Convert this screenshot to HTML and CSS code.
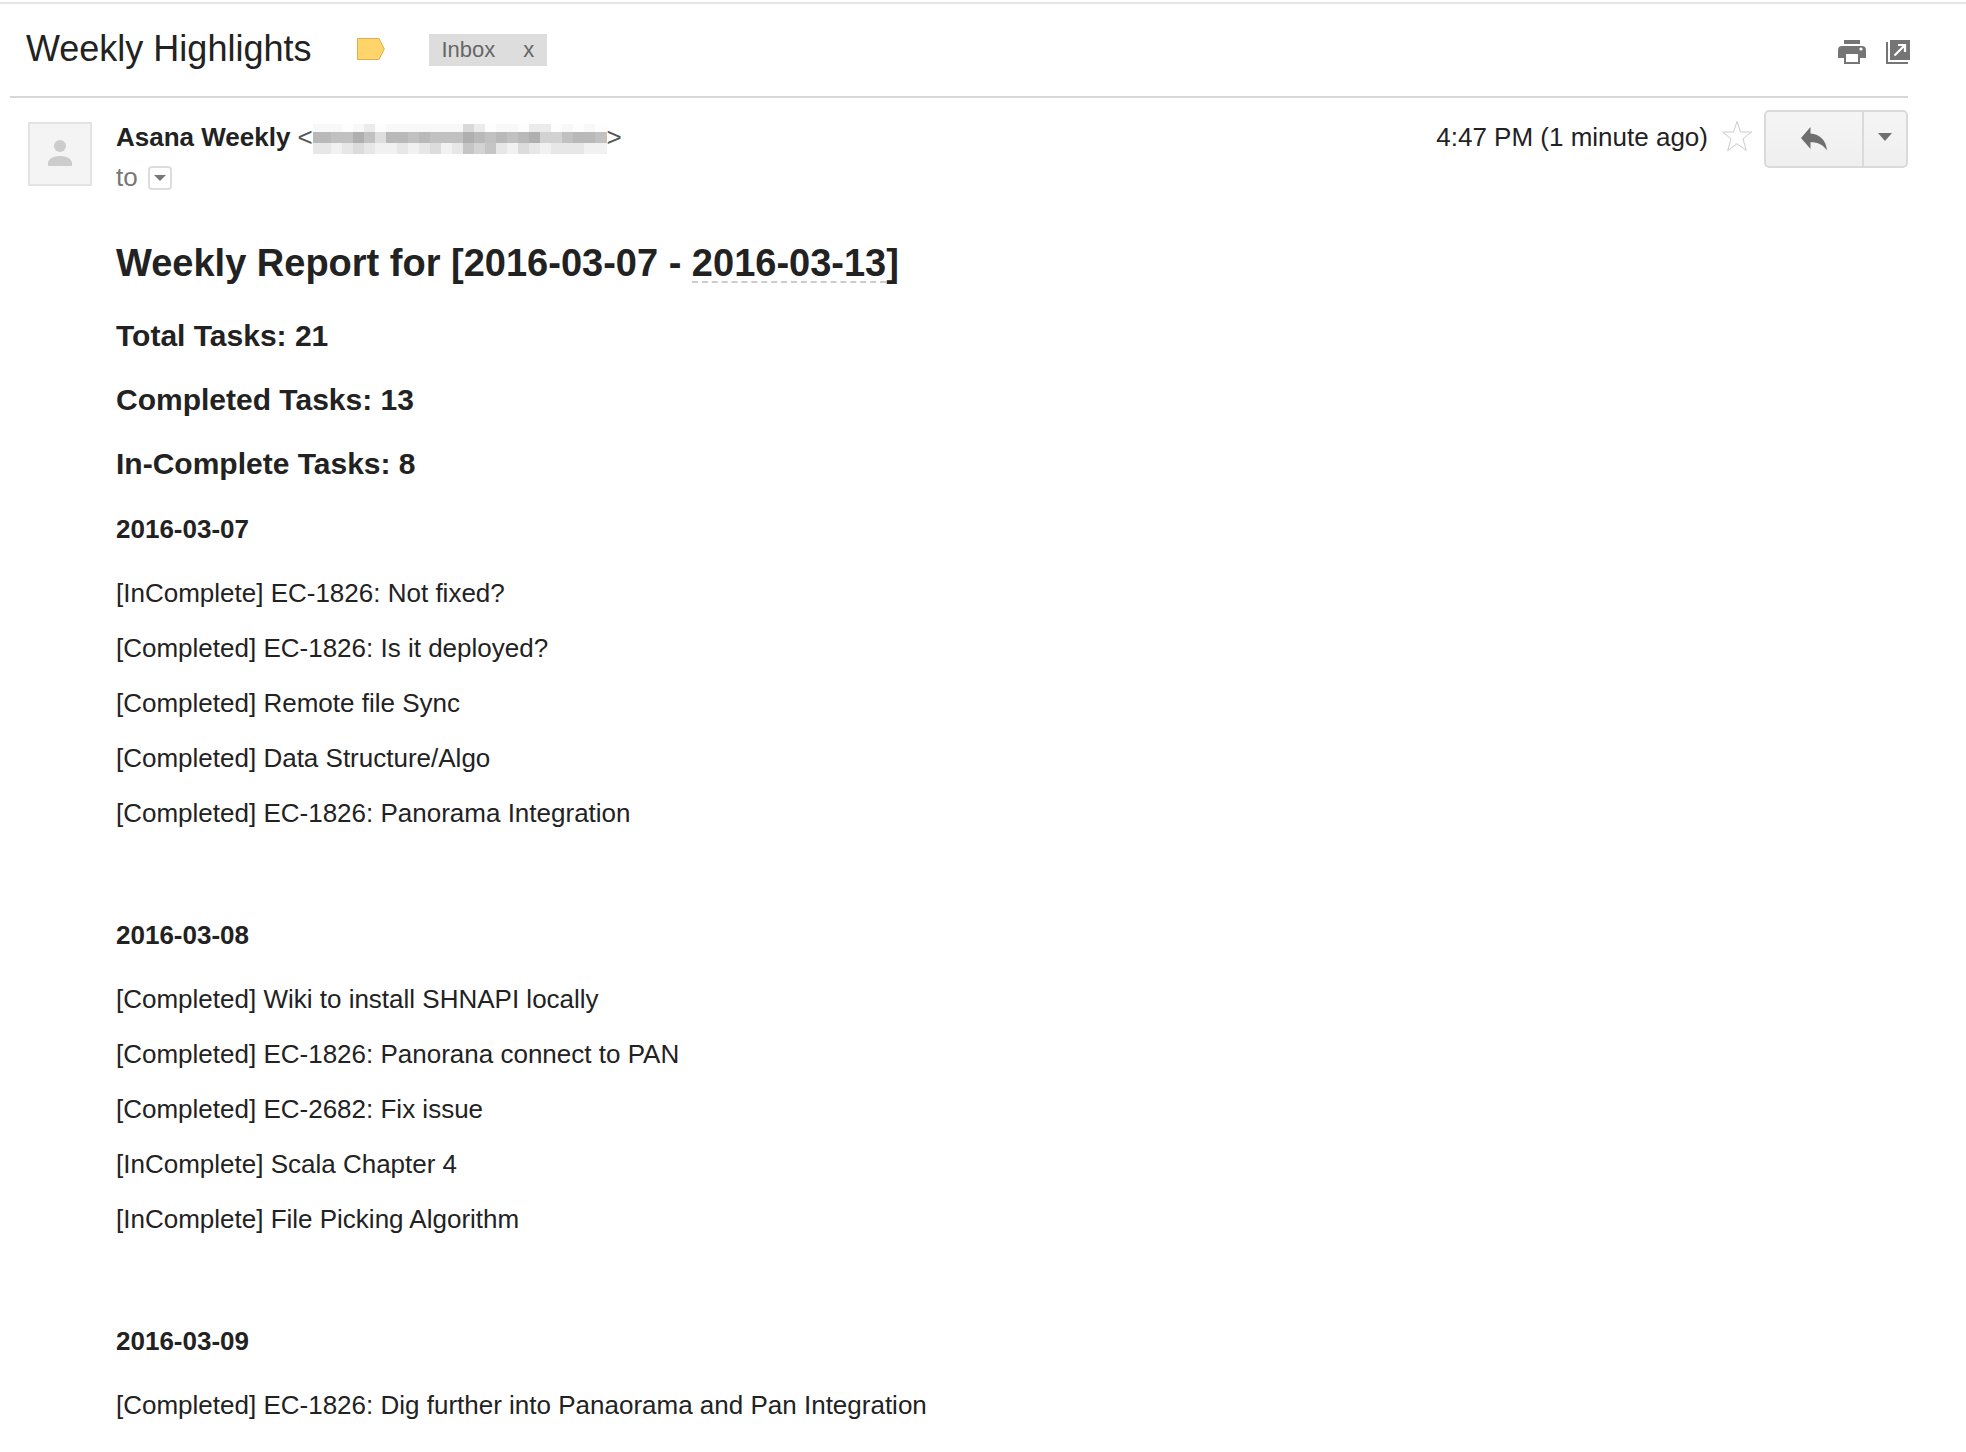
FILE: index.html
```html
<!DOCTYPE html>
<html lang="en">
<head>
<meta charset="utf-8">
<title>Weekly Highlights</title>
<link rel="stylesheet" href="styles.css">
</head>
<body>
<main class="thread">
  <header class="subject">
    <h1 class="subject-title">Weekly Highlights</h1>
    <svg class="marker" width="28" height="22" viewBox="0 0 28 22" aria-hidden="true"><path d="M.5.5H22L27.300 11L22 21.500H.5Z" fill="#ffd46b" stroke="#dcb04c"/></svg>
    <span class="label">Inbox <button class="label-remove" type="button" aria-label="Remove label Inbox">x</button></span>
    <div class="tools">
      <button class="tool" type="button" aria-label="Print all">
        <svg width="28" height="24" viewBox="0 0 28 24"><path fill="#757575" d="M6 0h16v4H6zM4 6h20a4 4 0 0 1 4 4v8h-6v6H6v-6H0v-8a4 4 0 0 1 4-4z"/><path fill="#fff" d="M8 14h12v8H8z"/><circle cx="23" cy="9" r="1.600" fill="#fff"/></svg>
      </button>
      <button class="tool" type="button" aria-label="In new window">
        <svg width="24" height="24" viewBox="0 0 24 24"><path fill="#757575" d="M4 0h20v20H4zM0 2h2v20h20v2H0z"/><path fill="none" stroke="#fff" stroke-width="2.200" d="M8.500 15.500L19 5M12 5h7v7"/></svg>
      </button>
    </div>
  </header>

  <article class="message">
    <header class="envelope">
      <svg class="avatar" width="64" height="64" viewBox="0 0 64 64" aria-hidden="true"><path fill="#f4f4f4" stroke="#e3e3e3" stroke-width="2" d="M1 1h62v62H1z"/><circle cx="32" cy="24" r="6" fill="#ccc"/><path fill="#ccc" d="M20 44v-3c0-4.500 7-7 12-7s12 2.500 12 7v3z"/></svg>
      <div class="people">
        <div class="from"><strong class="sender">Asana Weekly</strong><span class="address">&lt;<svg class="redacted" width="294" height="30" viewBox="0 0 294 30" shape-rendering="crispEdges" role="img" aria-label="Hidden address">
          <path fill="#f8f8f8" d="M0 0h294v8H0z"/><path fill="#ebebeb" d="M51 0h11v8H51zM161 0h11v8h-11zM216 0h22v8h-22z"/><path fill="#fdfdfd" d="M29 0h11v8H29zM62 0h11v8H62zM172 0h11v8h-11zM205 0h11v8h-11zM238 0h11v8h-11zM260 0h11v8h-11zM282 0h12v8h-12z"/><path fill="#d9d9d9" d="M150 0h11v8h-11z"/>
          <path fill="#c1c1c1" d="M0 8h294v11H0z"/><path fill="#b9b9b9" d="M0 8h18v11H0zM73 8h22v11H73zM106 8h11v11h-11zM161 8h11v11h-11zM183 8h11v11h-11zM205 8h11v11h-11zM260 8h22v11h-22z"/><path fill="#afafaf" d="M40 8h11v11H40zM150 8h11v11h-11zM216 8h11v11h-11z"/><path fill="#dedede" d="M62 8h11v11H62z"/><path fill="#d2d2d2" d="M227 8h22v11h-22z"/>
          <path fill="#e7e7e7" d="M0 19h294v11H0z"/><path fill="#f1f1f1" d="M18 19h11v11H18zM62 19h22v11H62zM95 19h11v11H95zM128 19h11v11h-11zM194 19h11v11h-11zM227 19h11v11h-11zM271 19h23v11h-23z"/><path fill="#dcdcdc" d="M40 19h11v11H40zM117 19h11v11h-11zM205 19h11v11h-11z"/><path fill="#c5c5c5" d="M150 19h11v11h-11zM172 19h11v11h-11z"/><path fill="#d3d3d1" d="M161 19h11v11h-11z"/>
        </svg>&gt;</span></div>
        <div class="to">to
          <button class="details" type="button" aria-label="Show details"><svg width="12" height="6" viewBox="0 0 12 6"><path fill="#777" d="M0 0h12L6 6z"/></svg></button>
        </div>
      </div>
      <time class="time">4:47 PM (1 minute ago)</time>
      <button class="star" type="button" aria-label="Star"><svg width="32" height="32" viewBox="0 0 32 32"><path fill="#fff" stroke="#ccc" d="M16 1.500L19.500 12H30.500L22 18.800L25.300 30.500L16 23.700L6.700 30.500L10 18.800L1.500 12H12.500Z"/></svg></button>
      <div class="reply-group">
        <button class="reply" type="button" aria-label="Reply"><svg width="26" height="24" viewBox="0 0 26 24"><path fill="#6f6f6f" d="M0 11L9.500 0V6.500C19 7.500 25 13 26 23.500C22 17.500 17 15.200 9.500 15.200V22Z"/></svg></button>
        <button class="more" type="button" aria-label="More"><svg width="14" height="8" viewBox="0 0 14 8"><path fill="#6f6f6f" d="M0 0h14L7 8z"/></svg></button>
      </div>
    </header>

    <div class="report">
      <h2>Weekly Report for [2016-03-07 - <span class="date-link">2016-03-13</span>]</h2>
      <div class="totals">
        <h3>Total Tasks: 21</h3>
        <h3>Completed Tasks: 13</h3>
        <h3>In-Complete Tasks: 8</h3>
      </div>
      <section class="day">
        <h4>2016-03-07</h4>
        <p>[InComplete] EC-1826: Not fixed?</p>
        <p>[Completed] EC-1826: Is it deployed?</p>
        <p>[Completed] Remote file Sync</p>
        <p>[Completed] Data Structure/Algo</p>
        <p>[Completed] EC-1826: Panorama Integration</p>
      </section>
      <section class="day">
        <h4>2016-03-08</h4>
        <p>[Completed] Wiki to install SHNAPI locally</p>
        <p>[Completed] EC-1826: Panorana connect to PAN</p>
        <p>[Completed] EC-2682: Fix issue</p>
        <p>[InComplete] Scala Chapter 4</p>
        <p>[InComplete] File Picking Algorithm</p>
      </section>
      <section class="day">
        <h4>2016-03-09</h4>
        <p>[Completed] EC-1826: Dig further into Panaorama and Pan Integration</p>
      </section>
    </div>
  </article>
</main>
</body>
</html>
```

FILE: styles.css
```css
* {
  box-sizing: border-box;
}

body {
  margin: 0;
  padding-top: 2px;
  background: #fff;
  color: #222;
  font: 26px/30px "Liberation Sans", Arial, sans-serif;
}

h1, h2, h3, h4, p {
  margin: 0;
}

svg {
  display: block;
}

button {
  display: flex;
  align-items: center;
  justify-content: center;
  padding: 0;
  border: 0;
  background: none;
  color: inherit;
  font: inherit;
  cursor: pointer;
}

.thread {
  border-top: 2px solid #e5e5e5;
  padding: 0 58px 0 10px;
}

/* Subject line */
.subject {
  display: flex;
  align-items: center;
  height: 94px;
  padding: 0 0 2px 16px;
  border-bottom: 2px solid #d8d8d8;
}

.subject-title {
  font-size: 36px;
  font-weight: 400;
  line-height: 42px;
}

.marker {
  margin-left: 46px;
}

.label {
  display: flex;
  align-items: center;
  gap: 28px;
  height: 32px;
  margin: 2px 0 0 44px;
  padding: 0 13px 0 12px;
  background: #ddd;
  color: #666;
  font-size: 22px;
  line-height: 32px;
}

.tools {
  display: flex;
  gap: 20px;
  margin: 6px -2px 0 auto;
}

/* Sender row */
.envelope {
  display: flex;
  align-items: flex-start;
  padding: 12px 0 0 18px;
}

.avatar {
  margin: 12px 24px 0 0;
}

.people {
  flex: 1;
  padding-top: 12px;
}

.from,
.address {
  display: flex;
}

.from {
  gap: 7px;
}

.address {
  color: #555;
}

.redacted {
  margin-top: 2px;
}

.to {
  display: flex;
  align-items: center;
  gap: 10px;
  padding-top: 8px;
  color: #777;
}

.details {
  width: 24px;
  height: 24px;
  margin-top: 2px;
  border: 2px solid #ddd;
  border-radius: 4px;
}

.time {
  padding-top: 12px;
}

.star {
  margin: 10px 11px 0 13px;
}

.reply-group {
  display: flex;
  height: 58px;
  border: 2px solid #dadada;
  border-radius: 5px;
  background: linear-gradient(#f5f5f5, #efefef);
}

.reply {
  width: 96px;
}

.more {
  width: 44px;
  padding-bottom: 4px;
  border-left: 2px solid #dadada;
}

/* Report body */
.report {
  padding: 50px 0 24px 106px;
}

h2 {
  font-size: 38px;
  line-height: 43px;
}

.date-link {
  display: inline-block;
  border-bottom: 2px dashed #ccc;
  line-height: 36px;
}

.totals {
  display: grid;
  gap: 30px;
  padding: 34px 0 33px;
}

h3 {
  font-size: 30px;
  line-height: 34px;
}

h4 {
  margin-bottom: 34px;
  font-size: 26px;
}

p + p {
  margin-top: 25px;
}

.day + .day {
  margin-top: 92px;
}
```
